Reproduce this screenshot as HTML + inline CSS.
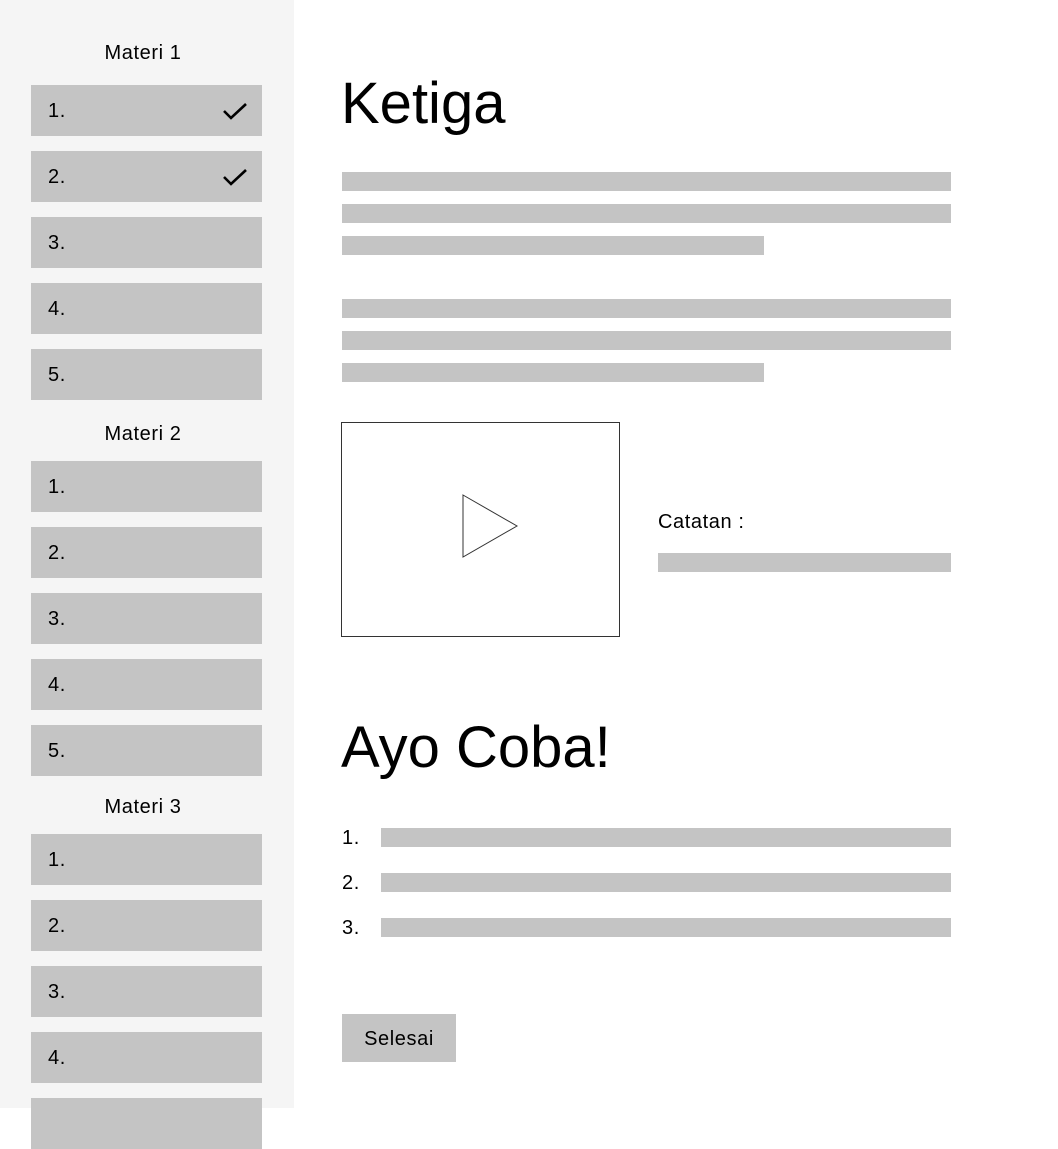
<!DOCTYPE html>
<html><head><meta charset="utf-8"><style>
*{margin:0;padding:0;box-sizing:border-box}
body{width:1058px;height:1112px;background:#fff;position:relative;overflow:hidden;font-family:"Liberation Sans",Arial,sans-serif;color:#000}
.side{position:absolute;left:0;top:0;width:294px;height:1108px;background:#f5f5f5}
.lbl{position:absolute;left:0;width:286px;text-align:center;font-size:20px;line-height:20px;letter-spacing:0.6px}
.it{position:absolute;left:31px;width:231px;height:51px;background:#c4c4c4;font-size:20px;line-height:20px;padding:16px 0 0 17px;letter-spacing:0.6px}
.it svg{position:absolute;right:13px;top:15px}
.a{position:absolute}
.bar{position:absolute;background:#c4c4c4;height:19px}
h1{position:absolute;left:341px;font-weight:normal;font-size:58px;line-height:58px}
.t{position:absolute;font-size:20px;line-height:20px;letter-spacing:0.6px}
</style></head><body>
<div class="side"></div>
<div class="lbl" style="top:43px">Materi 1</div>
<div class="it" style="top:85px">1.<svg width="28" height="22" viewBox="0 0 28 22"><path d="M3 11 L10 18 L25 4" fill="none" stroke="#000" stroke-width="2.6"/></svg></div>
<div class="it" style="top:151px">2.<svg width="28" height="22" viewBox="0 0 28 22"><path d="M3 11 L10 18 L25 4" fill="none" stroke="#000" stroke-width="2.6"/></svg></div>
<div class="it" style="top:217px">3.</div>
<div class="it" style="top:283px">4.</div>
<div class="it" style="top:349px">5.</div>
<div class="lbl" style="top:424px">Materi 2</div>
<div class="it" style="top:461px">1.</div>
<div class="it" style="top:527px">2.</div>
<div class="it" style="top:593px">3.</div>
<div class="it" style="top:659px">4.</div>
<div class="it" style="top:725px">5.</div>
<div class="lbl" style="top:797px">Materi 3</div>
<div class="it" style="top:834px">1.</div>
<div class="it" style="top:900px">2.</div>
<div class="it" style="top:966px">3.</div>
<div class="it" style="top:1032px">4.</div>
<div class="it" style="top:1098px"></div>

<h1 style="top:75px">Ketiga</h1>
<div class="bar" style="left:342px;top:172px;width:609px"></div>
<div class="bar" style="left:342px;top:204px;width:609px"></div>
<div class="bar" style="left:342px;top:236px;width:422px"></div>
<div class="bar" style="left:342px;top:299px;width:609px"></div>
<div class="bar" style="left:342px;top:331px;width:609px"></div>
<div class="bar" style="left:342px;top:363px;width:422px"></div>
<div class="a" style="left:341px;top:422px;width:279px;height:215px;border:1px solid #333"></div>
<svg class="a" style="left:462px;top:494px" width="58" height="66"><path d="M1 1 L55 32 L1 63 Z" fill="none" stroke="#333" stroke-width="1"/></svg>
<div class="t" style="left:658px;top:512px">Catatan :</div>
<div class="bar" style="left:658px;top:553px;width:293px"></div>

<h1 style="top:719px">Ayo Coba!</h1>
<div class="t" style="left:342px;top:828px">1.</div>
<div class="bar" style="left:381px;top:828px;width:570px"></div>
<div class="t" style="left:342px;top:873px">2.</div>
<div class="bar" style="left:381px;top:873px;width:570px"></div>
<div class="t" style="left:342px;top:918px">3.</div>
<div class="bar" style="left:381px;top:918px;width:570px"></div>
<div class="a" style="left:342px;top:1014px;width:114px;height:48px;background:#c4c4c4;font-size:20px;letter-spacing:0.6px;text-align:center;line-height:50px">Selesai</div>
</body></html>
